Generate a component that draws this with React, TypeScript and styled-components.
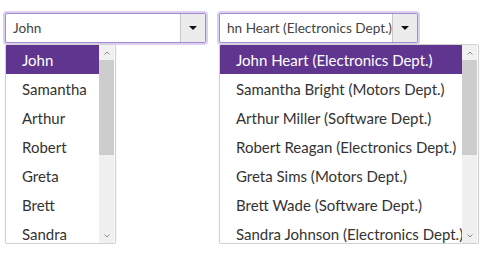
import React from 'react';
import styled, { createGlobalStyle } from 'styled-components';

const GlobalStyle = createGlobalStyle`
  html, body {
    margin: 0;
    padding: 0;
    background: #fff;
    font-family: Lato, "Noto Sans", sans-serif;
  }
`;

const Page = styled.div`
  display: flex;
  gap: 13px;
  padding: 13px 0 0 5px;
  align-items: flex-start;
`;

const Column = styled.div<{ $listWidth: number }>`
  display: flex;
  flex-direction: column;
  gap: 1px;
  --list-width: ${p => p.$listWidth}px;
`;

const Combo = styled.div<{ $width: number }>`
  width: ${p => p.$width}px;
  height: 30px;
  box-sizing: border-box;
  display: flex;
  border: 1px solid #a489d3;
  border-radius: 2px;
  box-shadow: 0 0 0 2px #dccff0;
  background: #fff;
  overflow: hidden;
`;

const ComboText = styled.div`
  flex: 1;
  min-width: 0;
  display: flex;
  align-items: center;
  padding: 0 2px 0 7px;
  font-size: 13.6px;
  color: #444;
  white-space: nowrap;
  overflow: hidden;
`;

const DropButton = styled.div`
  width: 24px;
  flex: none;
  display: flex;
  align-items: center;
  justify-content: center;
  background: #ececec;
  border-left: 1px solid #c8c8c8;
`;

const Caret = styled.span`
  width: 0;
  height: 0;
  border-left: 4px solid transparent;
  border-right: 4px solid transparent;
  border-top: 4px solid #111;
`;

const List = styled.div`
  width: var(--list-width);
  height: 200px;
  box-sizing: border-box;
  display: flex;
  border: 1px solid #d2d2d2;
  border-radius: 2px;
  box-shadow: 0 1px 2px rgba(0, 0, 0, 0.08);
  background: #fff;
  overflow: hidden;
`;

const Items = styled.div`
  flex: 1;
  min-width: 0;
  overflow: hidden;
`;

const Item = styled.div<{ $selected?: boolean }>`
  height: 29px;
  display: flex;
  align-items: center;
  padding-left: 16px;
  font-size: 15px;
  white-space: nowrap;
  color: ${p => (p.$selected ? '#fff' : '#333')};
  background: ${p => (p.$selected ? '#5f3590' : 'transparent')};
`;

const Scrollbar = styled.div`
  width: 15px;
  flex: none;
  display: flex;
  flex-direction: column;
  background: #f0f0f0;
  border-right: 1px solid #fafafa;
`;

const Arrow = styled.div`
  height: 15px;
  flex: none;
  display: flex;
  align-items: center;
  justify-content: center;
`;

const Thumb = styled.div`
  height: 95px;
  flex: none;
  background: #cdcdcd;
`;

const Track = styled.div`
  flex: 1;
`;

const Chevron = ({ up }: { up?: boolean }) => (
  <svg width="6" height="4" viewBox="0 0 6 4">
    <path
      d={up ? 'M0.5 3.5 L3 1 L5.5 3.5' : 'M0.5 0.5 L3 3 L5.5 0.5'}
      fill="none"
      stroke="#8a8a8a"
      strokeWidth="1"
    />
  </svg>
);

const ScrollBar = () => (
  <Scrollbar>
    <Arrow>
      <Chevron up />
    </Arrow>
    <Thumb />
    <Track />
    <Arrow>
      <Chevron />
    </Arrow>
  </Scrollbar>
);

const short = ['John', 'Samantha', 'Arthur', 'Robert', 'Greta', 'Brett', 'Sandra'];
const full = [
  'John Heart (Electronics Dept.)',
  'Samantha Bright (Motors Dept.)',
  'Arthur Miller (Software Dept.)',
  'Robert Reagan (Electronics Dept.)',
  'Greta Sims (Motors Dept.)',
  'Brett Wade (Software Dept.)',
  'Sandra Johnson (Electronics Dept.)',
];

export default function App() {
  return (
    <>
      <GlobalStyle />
      <Page>
        <Column $listWidth={111}>
          <Combo $width={201}>
            <ComboText>John</ComboText>
            <DropButton>
              <Caret />
            </DropButton>
          </Combo>
          <List>
            <Items>
              {short.map((n, i) => (
                <Item key={n} $selected={i === 0}>{n}</Item>
              ))}
            </Items>
            <ScrollBar />
          </List>
        </Column>
        <Column $listWidth={260}>
          <Combo $width={199}>
            <ComboText>hn Heart (Electronics Dept.)</ComboText>
            <DropButton>
              <Caret />
            </DropButton>
          </Combo>
          <List>
            <Items>
              {full.map((n, i) => (
                <Item key={n} $selected={i === 0}>{n}</Item>
              ))}
            </Items>
            <ScrollBar />
          </List>
        </Column>
      </Page>
    </>
  );
}
